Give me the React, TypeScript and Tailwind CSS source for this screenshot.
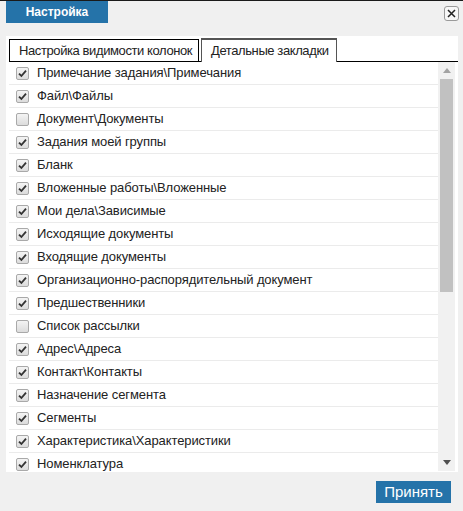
import React from 'react';

const items: { label: string; checked: boolean }[] = [
  { label: 'Примечание задания\\Примечания', checked: true },
  { label: 'Файл\\Файлы', checked: true },
  { label: 'Документ\\Документы', checked: false },
  { label: 'Задания моей группы', checked: true },
  { label: 'Бланк', checked: true },
  { label: 'Вложенные работы\\Вложенные', checked: true },
  { label: 'Мои дела\\Зависимые', checked: true },
  { label: 'Исходящие документы', checked: true },
  { label: 'Входящие документы', checked: true },
  { label: 'Организационно-распорядительный документ', checked: true },
  { label: 'Предшественники', checked: true },
  { label: 'Список рассылки', checked: false },
  { label: 'Адрес\\Адреса', checked: true },
  { label: 'Контакт\\Контакты', checked: true },
  { label: 'Назначение сегмента', checked: true },
  { label: 'Сегменты', checked: true },
  { label: 'Характеристика\\Характеристики', checked: true },
  { label: 'Номенклатура', checked: true },
];

function Checkbox({ checked }: { checked: boolean }) {
  return (
    <span className="w-[13px] h-[13px] shrink-0 rounded-[2px] border border-[#a9a9a9] bg-gradient-to-b from-[#f4f4f4] to-[#dcdcdc] flex items-center justify-center">
      {checked && (
        <svg width="9" height="9" viewBox="0 0 9 9">
          <path d="M1 4.6 L3.4 7 L8 1.6" fill="none" stroke="#333" strokeWidth="1.8" />
        </svg>
      )}
    </span>
  );
}

function Scrollbar() {
  return (
    <div className="w-[17px] h-full bg-[#f1f1f1] flex flex-col items-center">
      <div className="h-[17px] w-full flex items-center justify-center">
        <svg width="8" height="5" viewBox="0 0 8 5">
          <path d="M0 5 L4 0 L8 5 Z" fill="#a3a3a3" />
        </svg>
      </div>
      <div className="w-[13px] h-[213px] bg-[#c1c1c1]" />
      <div className="flex-1" />
      <div className="h-[17px] w-full flex items-center justify-center">
        <svg width="8" height="5" viewBox="0 0 8 5">
          <path d="M0 0 L8 0 L4 5 Z" fill="#505050" />
        </svg>
      </div>
    </div>
  );
}

export default function App() {
  return (
    <div className="relative w-[463px] h-[511px] bg-[#f0f0f0] border-t border-[#1a1a1a] font-['Liberation_Sans',Arial,sans-serif] text-[#222]">
      {/* dialog title tab */}
      <div className="h-[35px] pl-[6px]">
        <div className="w-[102px] h-[22px] bg-[#2573a9] text-white text-[12px] font-bold flex items-center justify-center">
          Настройка
        </div>
      </div>

      <button className="absolute top-[5px] right-[4px] w-[15px] h-[15px] rounded-[3px] border border-[#9a9a9a] bg-[#f7f7f7] flex items-center justify-center">
        <svg width="9" height="9" viewBox="0 0 9 9">
          <path d="M1 1 L8 8 M8 1 L1 8" stroke="#222" strokeWidth="1.5" />
        </svg>
      </button>

      {/* settings body */}
      <div className="ml-[6px] w-[452px] h-[436px] bg-white pl-[3px] pt-[2px] flex flex-col">
        <div className="flex items-end h-[24px] border-b border-black text-[13px] tracking-[-0.4px] whitespace-nowrap">
          <div className="h-[22px] w-[190px] shrink-0 border border-black border-b-0 pl-[9px] flex items-center mr-[2px]">
            Настройка видимости колонок
          </div>
          <div className="h-[24px] w-[136px] shrink-0 border-t-2 border-x border-[#555] bg-white -mb-px pl-[9px] flex items-center">
            Детальные закладки
          </div>
        </div>

        <div className="flex h-[409px]">
          <div className="w-[429px] overflow-hidden text-[13px] tracking-[-0.1px] whitespace-nowrap">
            {items.map((item) => (
              <div
                key={item.label}
                className="h-[23px] border-b border-[#ebebeb] flex items-center gap-[8px] pl-[7px]"
              >
                <Checkbox checked={item.checked} />
                <span>{item.label}</span>
              </div>
            ))}
          </div>
          <Scrollbar />
        </div>
      </div>

      <div className="flex justify-end pr-[12px] pt-[9px]">
        <button className="w-[75px] h-[22px] bg-[#2573a9] text-white text-[15px] flex items-center justify-center">
          Принять
        </button>
      </div>
    </div>
  );
}
